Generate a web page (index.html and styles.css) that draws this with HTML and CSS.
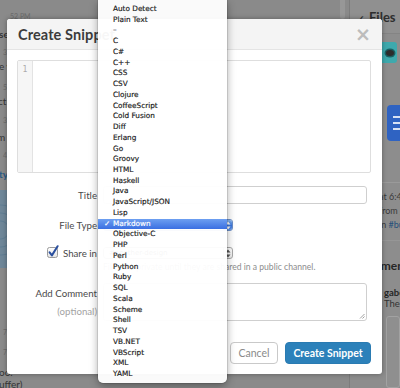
FILE: index.html
```html
<!DOCTYPE html>
<html lang="en">
<head>
<meta charset="utf-8">
<title>Create Snippet</title>
<link rel="stylesheet" href="styles.css">
</head>
<body>
<div class="app">
  <main class="messages">
    <div class="msg-col">
      <div class="ln ts l1">52 PM</div>
      <div class="ln txt l2">se</div>
      <div class="ln ts l3">3:</div>
      <div class="ln txt l4">e v</div>
      <div class="ln ts l5">5:</div>
      <div class="ln txt l6">ct</div>
      <div class="ln ts l7">3:</div>
      <div class="ln txt l8">m</div>
      <div class="ln ts l9">4:</div>
      <div class="ln link l10">ty</div>
      <div class="pic"></div>
      <div class="ln ts l11">7</div>
      <div class="ln ts l12">7:</div>
      <div class="ln txt l13">oo.</div>
      <div class="ln txt l14">uffer)</div>
    </div>
    <div class="scrollbar"></div>
  </main>
  <aside class="files">
    <div class="files-head"><span class="fchk">✓</span>Files</div>
    <div class="file-item">
      <div class="avatar"><span class="eye"></span></div>
      <div class="file-btn"><i></i><i></i><i></i></div>
    </div>
    <div class="file-meta">
      <p>at 6:47 PM</p>
      <p>from gabe</p>
      <p>in <span class="chan">#bugs</span></p>
    </div>
    <div class="comments">
      <h2>Comments</h2>
      <p class="who">gabe</p>
      <p class="said">The</p>
      <div class="card"></div>
    </div>
  </aside>
</div>

<div class="modal">
  <div class="modal-head">
    <h1>Create Snippet</h1>
    <span class="close">×</span>
  </div>
  <div class="modal-body">
    <div class="editor">
      <div class="gutter">1</div>
      <div class="code"></div>
    </div>
    <div class="form">
      <div class="row row-title">
        <label class="lbl">Title</label>
        <div class="input"></div>
      </div>
      <div class="row row-type">
        <label class="lbl">File Type</label>
        <div class="select focus"><span class="val">Markdown</span><span class="stepper"><svg width="6" height="9" viewBox="0 0 6 9"><path d="M3 0.5 L5.5 3.5 H0.5 Z M3 8.5 L5.5 5.5 H0.5 Z" fill="#fff"/></svg></span></div>
      </div>
      <div class="row row-share">
        <label class="lbl check"><svg class="cb" width="13" height="13" viewBox="0 0 13 13"><defs><linearGradient id="cbg" x1="0" y1="0" x2="0" y2="1"><stop offset="0" stop-color="#ffffff"/><stop offset="1" stop-color="#e4e4e4"/></linearGradient></defs><rect x="0.5" y="2.5" width="10" height="10" rx="2" fill="url(#cbg)" stroke="#9a9a9a"/><path d="M2.6 7.4 L4.9 10.4 L10.6 1.2" stroke="#2a4f9e" stroke-width="2" fill="none" stroke-linecap="round" stroke-linejoin="round"/></svg>Share in</label>
        <div class="select"><span class="val">#another-design</span><span class="stepper"><svg width="6" height="9" viewBox="0 0 6 9"><path d="M3 0.5 L5.5 3.5 H0.5 Z M3 8.5 L5.5 5.5 H0.5 Z" fill="#555"/></svg></span></div>
      </div>
      <div class="row row-hint">
        <span></span>
        <p class="hint">Files are private until they are shared in a public channel.</p>
      </div>
      <div class="row row-comment">
        <label class="lbl">Add Comment<small>(optional)</small></label>
        <div class="textarea"><svg class="grip" width="6" height="6" viewBox="0 0 6 6"><path d="M1 5.5 L5.5 1 M3.5 5.5 L5.5 3.5" stroke="#888" stroke-width="0.8"/></svg></div>
      </div>
    </div>
  </div>
  <div class="modal-foot">
    <button class="btn">Cancel</button>
    <button class="btn primary">Create Snippet</button>
  </div>
</div>

<ul class="menu">
  <li>Auto Detect</li>
  <li>Plain Text</li>
  <li>–</li>
  <li>C</li>
  <li>C#</li>
  <li>C++</li>
  <li>CSS</li>
  <li>CSV</li>
  <li>Clojure</li>
  <li>CoffeeScript</li>
  <li>Cold Fusion</li>
  <li>Diff</li>
  <li>Erlang</li>
  <li>Go</li>
  <li>Groovy</li>
  <li>HTML</li>
  <li>Haskell</li>
  <li>Java</li>
  <li>JavaScript/JSON</li>
  <li>Lisp</li>
  <li class="sel"><span class="tick">✓</span>Markdown</li>
  <li>Objective-C</li>
  <li>PHP</li>
  <li>Perl</li>
  <li>Python</li>
  <li>Ruby</li>
  <li>SQL</li>
  <li>Scala</li>
  <li>Scheme</li>
  <li>Shell</li>
  <li>TSV</li>
  <li>VB.NET</li>
  <li>VBScript</li>
  <li>XML</li>
  <li>YAML</li>
</ul>
</body>
</html>
```

FILE: styles.css
```css
* { box-sizing: border-box; margin: 0; padding: 0; }
html, body { width: 400px; height: 388px; overflow: hidden; }
body {
  position: relative;
  background: #8a8a8a;
  font-family: Lato, "Open Sans", sans-serif;
  color: #3a3a3a;
}

/* ---------- dimmed app behind the dialog ---------- */
.app { display: flex; height: 388px; }
.messages { width: 349px; display: flex; }
.msg-col { flex: 1; overflow: hidden; }
.ln { line-height: 12px; height: 12px; white-space: nowrap; }
.ts { font-size: 7px; color: #6c6c6c; }
.txt { font-size: 10px; color: #353535; }
.link { font-size: 10px; color: #2b5a86; font-weight: 700; }
.l1 { margin-top: 10px; padding-left: 10px; }
.l2 { margin-top: 6px; margin-left: -1px; font-weight: 700; }
.l3 { margin-top: 6px; padding-left: 3px; }
.l4 { margin-top: 2px; margin-left: -1px; }
.l5 { margin-top: 9px; padding-left: 3px; }
.l6 { margin-top: 2px; margin-left: -2px; }
.l7 { margin-top: 7px; padding-left: 3px; }
.l8 { margin-top: 5px; margin-left: -3px; }
.l9 { margin-top: 6px; padding-left: 3px; }
.l10 { margin-top: 7px; margin-left: -1px; }
.pic {
  margin-top: 10px; height: 78px; width: 60px;
  background:
    radial-gradient(circle at 0 40px, transparent 8px, #5f7d93 9px, transparent 10px, transparent 16px, #5f7d93 17px, transparent 18px, transparent 24px, #5f7d93 25px, transparent 26px),
    #6f8799;
}
.l11 { margin-top: 58px; padding-left: 3px; }
.l12 { margin-top: 8px; padding-left: 3px; }
.l13 { margin-top: 8px; margin-left: -1px; }
.l14 { margin-left: -1px; }
.scrollbar { width: 5px; height: 19px; margin-right: 4px; background: #979797; border-radius: 0 0 2px 2px; }

.files { width: 51px; background: #8d8d8d; border-left: 1px solid #7c7c7c; overflow: hidden; }
.files-head {
  height: 34px; line-height: 34px; padding-left: 7px;
  font-size: 13px; font-weight: 700; color: #2e2e2e; white-space: nowrap;
  border-bottom: 1px solid #848484; background: #909090;
}
.fchk { font-size: 9px; margin-right: 4px; }
.file-item { height: 149px; padding-top: 8px; border-bottom: 1px solid #9a9a9a; }
.avatar {
  width: 19px; height: 21px; margin-left: 28px; border-radius: 3px;
  background: #3ea9ad; display: flex; align-items: center; justify-content: center;
}
.eye { width: 8px; height: 6px; border-radius: 50%; background: #2c2c2c; box-shadow: 0 0 0 1.5px #1a5f62; margin-left: 4px; }
.file-btn {
  width: 30px; height: 36px; margin: 42px 0 0 37px; border-radius: 4px;
  background: #2f63c2; display: flex; flex-direction: column; justify-content: center; gap: 4px; padding-left: 6px;
}
.file-btn i { display: block; height: 2px; width: 12px; background: #d8e2f4; }
.file-meta { padding: 7px 0 0 29px; font-size: 9px; line-height: 14px; color: #3b3b3b; white-space: nowrap; height: 58px; border-bottom: 1px solid #969696; }
.chan { color: #254f7a; }
.comments { padding: 17px 0 0 6px; white-space: nowrap; }
.comments h2 { font-size: 12px; font-weight: 700; color: #262626; line-height: 16px; }
.who { margin-top: 13px; padding-left: 28px; font-size: 9.5px; font-weight: 700; color: #262626; line-height: 11px; }
.said { padding-left: 28px; font-size: 9.5px; color: #333; line-height: 11px; }
.card { margin: 7px 0 0 30px; height: 72px; border: 1px solid #a2a2a2; border-radius: 3px; background: #8f8f8f; }

/* ---------- dialog ---------- */
.modal {
  position: absolute; left: 7px; top: 19px; width: 375px; height: 355px;
  background: #fff; border-radius: 3px;
  box-shadow: 0 0 5px rgba(0,0,0,.35);
  display: flex; flex-direction: column;
}
.modal-head {
  height: 31px; background: #f4f4f4; border-bottom: 1px solid #e4e4e4;
  border-radius: 3px 3px 0 0;
  display: flex; align-items: center; justify-content: space-between;
  padding: 0 11px 0 11px;
}
.modal-head h1 { font-size: 14.5px; font-weight: 700; color: #3c3c3c; letter-spacing: 0.1px; }
.close { font-size: 19px; line-height: 1; color: #bcbcbc; font-weight: 700; font-family: "DejaVu Sans", sans-serif; }
.modal-body { padding: 10px 11px 0 10px; }
.editor { height: 113px; border: 1px solid #dedede; border-radius: 2px; display: flex; }
.gutter {
  width: 15px; background: #f6f6f6; border-right: 1px solid #e3e3e3;
  font-size: 8px; line-height: 10px; color: #ababab; text-align: center; padding-top: 4px;
  font-family: "DejaVu Sans Mono", monospace;
}
.code { flex: 1; }

.form { padding-right: 4px; }
.row { display: grid; grid-template-columns: 80px 1fr; column-gap: 6px; align-items: center; }
.lbl { font-size: 9.7px; color: #4a4a4a; text-align: right; white-space: nowrap; }
.row-title { margin-top: 13px; }
.input { height: 18px; border: 1px solid #cfcfcf; border-radius: 3px; }
.row-type { margin-top: 15px; }
.row-share { margin-top: 16px; }
.check { display: flex; align-items: center; justify-content: flex-end; gap: 3px; }
.cb { margin-top: -3px; }
.select {
  width: 130px; height: 12px; border: 1px solid #a9a9a9; border-radius: 3px;
  background: linear-gradient(#ffffff, #ececec);
  display: flex; align-items: stretch; overflow: hidden;
  font-family: "DejaVu Sans", sans-serif; font-size: 7px; color: #333;
}
.val { flex: 1; padding-left: 5px; line-height: 10px; }
.stepper { width: 9px; border-left: 1px solid #b5b5b5; display: flex; align-items: center; justify-content: center; }
.focus { border-color: #6b8fc9; }
.focus .stepper { background: linear-gradient(#8ab8f2, #3c78e0 55%, #5d93ea); border-left-color: #4a79c8; }
.row-hint { margin-top: 3px; }
.hint { font-size: 8.6px; line-height: 10px; color: #8d8d8d; white-space: nowrap; }
.row-comment { margin-top: 11px; align-items: start; }
.row-comment .lbl { line-height: 18px; padding-top: 1px; display: flex; flex-direction: column; align-items: flex-end; }
.row-comment small { font-size: 9.7px; color: #a3a3a3; }
.textarea { height: 38px; border: 1px solid #cfcfcf; border-radius: 3px; display: flex; align-items: flex-end; justify-content: flex-end; padding: 0 1px 1px 0; }

.modal-foot { display: flex; justify-content: flex-end; gap: 7px; padding: 21px 11px 0 0; }
.btn {
  height: 22px; border-radius: 4px; font-family: Lato, sans-serif; font-size: 10.5px;
  background: #fff; border: 1px solid #c9c9c9; color: #8a8a8a; padding: 0;
  white-space: nowrap;
}
.btn:first-child { width: 48px; }
.btn.primary { width: 86px; background: #2c81ba; border-color: #2a7bb2; color: #fff; font-weight: 700; }

/* ---------- native popup menu ---------- */
.menu {
  position: absolute; left: 98px; top: 0; width: 129px;
  padding: 4px 0 3px; list-style: none;
  background: rgba(255,255,255,.955);
  border-radius: 0 0 5px 5px;
  box-shadow: 0 3px 9px rgba(0,0,0,.35), 0 0 0 0.5px rgba(0,0,0,.2);
  font-family: "DejaVu Sans", sans-serif; font-size: 7.3px; color: #1a1a1a;
  -webkit-text-stroke: 0.17px #1a1a1a;
}
.menu li { height: 10.74px; line-height: 10.74px; padding-left: 15px; white-space: nowrap; }
.menu li.sel { background: linear-gradient(#6d9ff1, #3a6fe2); color: #fff; -webkit-text-stroke-color: #fff; }
.tick { display: inline-block; width: 12px; margin-left: -12px; text-align: center; }
```
